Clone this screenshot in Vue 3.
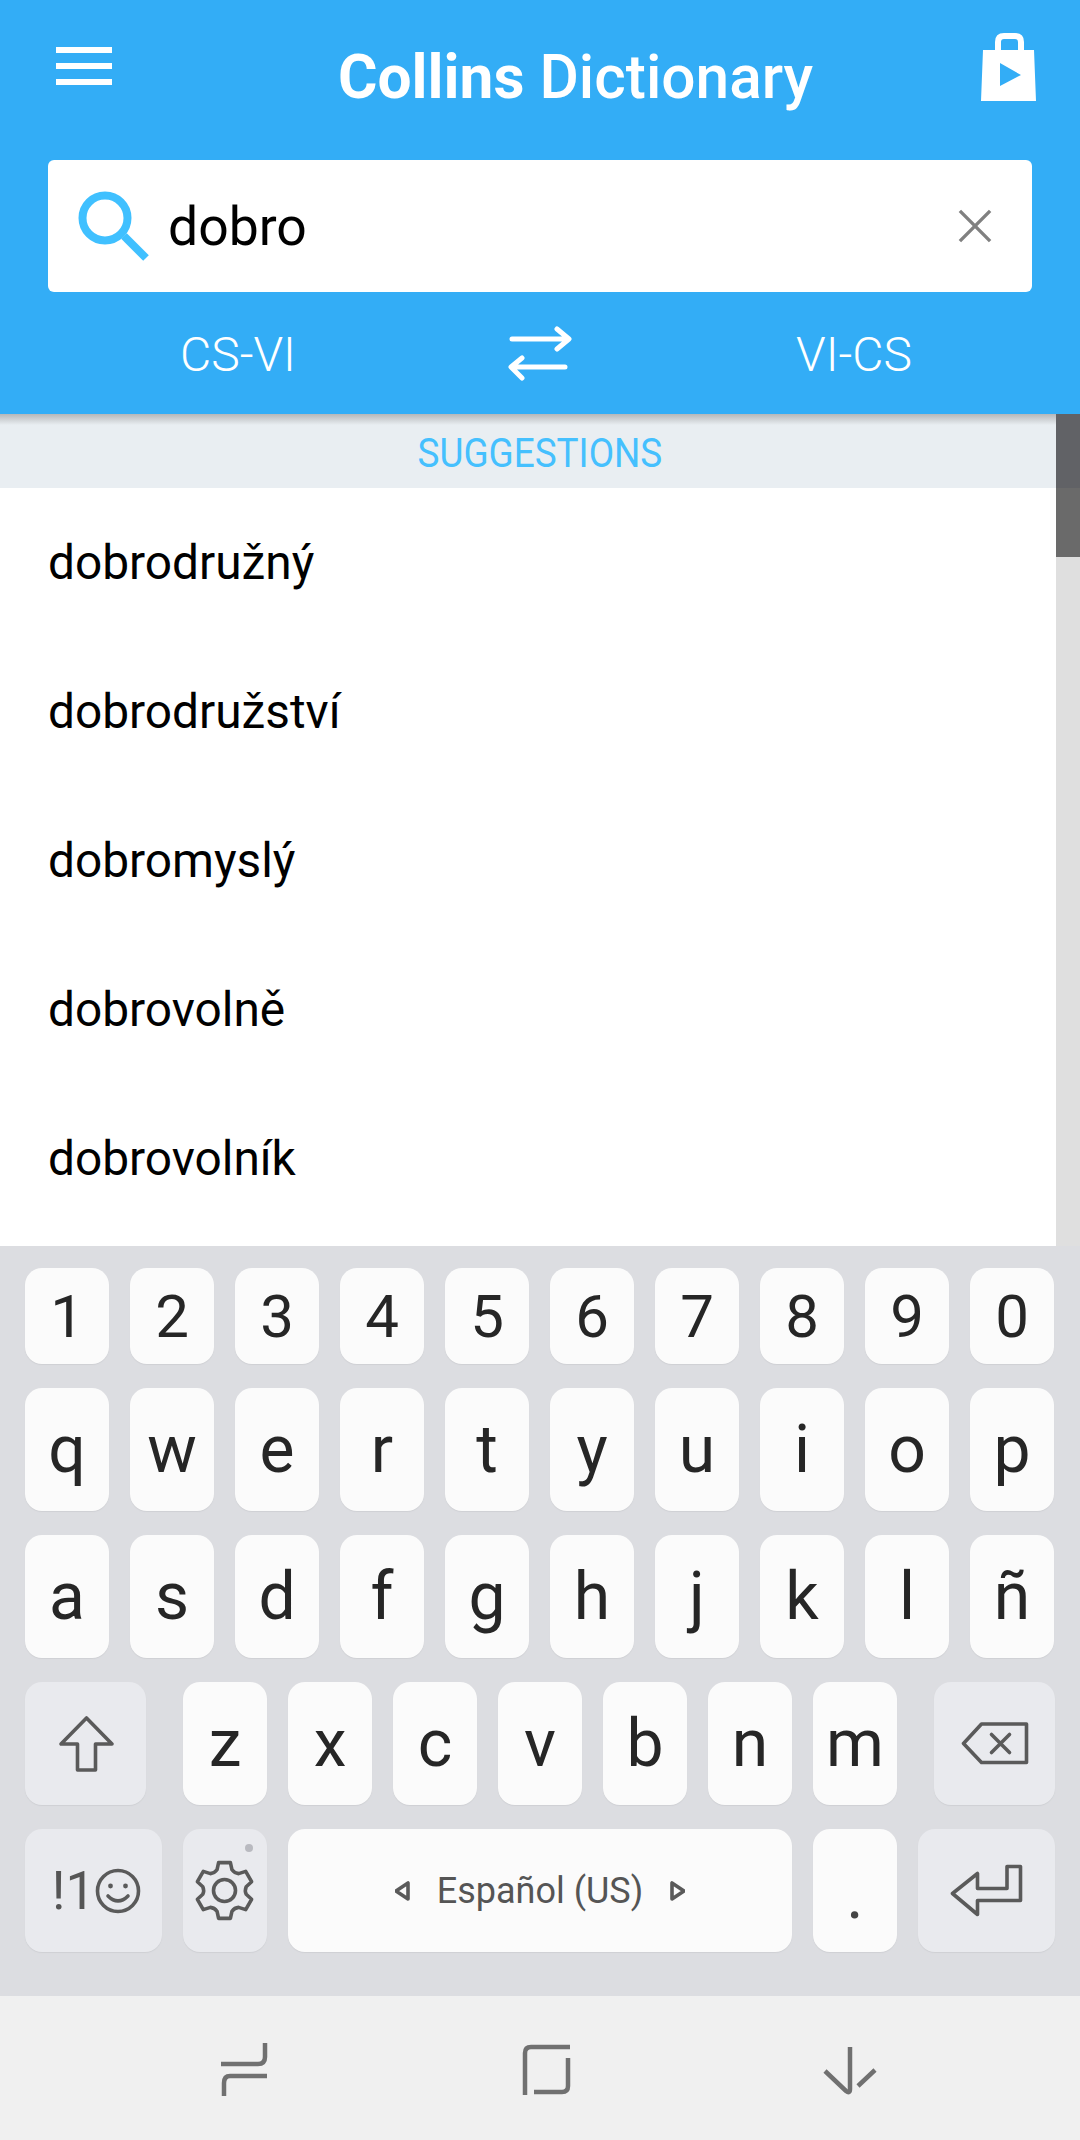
<template>
  <div class="screen">
    <header class="app-bar">
      <div class="top-row">
        <div class="menu"><i></i><i></i><i></i></div>
        <div class="title"><b>Collins</b> Dictionary</div>
        <svg class="bag" viewBox="980 33 57 68">
          <path class="bag-handle" d="M998 52V42Q998 36 1004 36H1015Q1021 36 1021 42V52" />
          <path class="bag-body" d="M983 50H1034L1036 101H981ZM1000 63V86L1021 75Z" />
        </svg>
      </div>
      <div class="search">
        <svg class="search-icon" viewBox="76 188 76 74">
          <circle cx="105" cy="217" r="22.5" />
          <path d="M124 235L146 257" />
        </svg>
        <span class="query">dobro</span>
        <svg class="clear" viewBox="0 0 36 36"><path d="M2 2L34 34M34 2L2 34" /></svg>
      </div>
      <div class="lang-row">
        <span class="lang">CS-VI</span>
        <svg class="swap" viewBox="508 325 64 55">
          <path d="M512 338H568M557 328L569 338L557 348" />
          <path d="M565 366H512M522 357L511 366L522 377" />
        </svg>
        <span class="lang lang-right">VI-CS</span>
      </div>
    </header>

    <div class="results">
      <div class="list">
        <div class="list-label"><span>SUGGESTIONS</span></div>
        <div v-for="word in words" :key="word" class="word">{{ word }}</div>
      </div>
      <div class="scrollbar">
        <div class="thumb-top"></div>
        <div class="thumb-bottom"></div>
      </div>
    </div>

    <div class="keyboard">
      <div class="key-row numbers">
        <div v-for="k in numbers" :key="k" class="key">{{ k }}</div>
      </div>
      <div class="key-row">
        <div v-for="k in row1" :key="k" class="key letter">{{ k }}</div>
      </div>
      <div class="key-row">
        <div v-for="k in row2" :key="k" class="key letter">{{ k }}</div>
      </div>
      <div class="key-row">
        <div class="key fn wide shift-key">
          <svg width="60" height="60" viewBox="55 1713 60 60">
            <path class="ico" d="M85.5 1717L60 1743H76.5V1769H94.5V1743H111Z" />
          </svg>
        </div>
        <div v-for="k in row3" :key="k" class="key letter">{{ k }}</div>
        <div class="key fn wide del-key">
          <svg width="70" height="50" viewBox="959.5 1718.5 70 50">
            <path class="ico" d="M963 1743L981 1723.5H1026V1762H981Z" />
            <path class="ico" d="M991 1734L1009 1752M1009 1734L991 1752" />
          </svg>
        </div>
      </div>
      <div class="key-row">
        <div class="key fn side sym-key">
          <span>!1</span>
          <svg width="46" height="46" viewBox="91 1867 46 46">
            <circle class="ico" cx="114" cy="1890" r="20.5" />
            <circle class="eye" cx="106.5" cy="1885" r="2.4" />
            <circle class="eye" cx="121.5" cy="1885" r="2.4" />
            <path class="ico" d="M104 1895Q114 1905 124 1895" />
          </svg>
        </div>
        <div class="key fn gear-key">
          <svg width="70" height="70" viewBox="190 1855.5 70 70">
            <path class="ico" :d="gearPath" />
            <circle class="ico" cx="224.5" cy="1890" r="11" />
          </svg>
          <span class="gear-dot"></span>
        </div>
        <div class="key space">
          <svg width="15" height="20" viewBox="0 0 15 20"><path class="ico" d="M13 2V18L1 10Z" /></svg>
          <span>Español (US)</span>
          <svg width="15" height="20" viewBox="0 0 15 20"><path class="ico" d="M2 2V18L14 10Z" /></svg>
        </div>
        <div class="key letter period">.</div>
        <div class="key fn side">
          <svg width="80" height="60" viewBox="946.5 1860.5 80 60">
            <path class="ico" d="M952 1893L977 1873V1888H1006.5V1866H1020V1900H977V1914Z" />
          </svg>
        </div>
      </div>
    </div>

    <nav class="nav-bar">
      <div class="nav-cell">
        <svg width="60" height="60" viewBox="214 2040 60 60">
          <path class="nav-ico" d="M221 2064H258Q265 2064 265 2057V2043M267 2076H230Q224 2076 224 2083V2096" />
        </svg>
      </div>
      <div class="nav-cell">
        <svg width="60" height="60" viewBox="517 2040 60 60">
          <path class="nav-ico" d="M525 2095V2053Q525 2047 531 2047H570M568 2058V2086Q568 2092 562 2092H534" />
        </svg>
      </div>
      <div class="nav-cell">
        <svg width="60" height="60" viewBox="819 2040 60 60">
          <path class="nav-ico" d="M849 2047V2089Q849 2094 845 2091L824 2071M874 2070L857 2086" />
        </svg>
      </div>
    </nav>
  </div>
</template>

<script setup>
const words = ['dobrodružný', 'dobrodružství', 'dobromyslý', 'dobrovolně', 'dobrovolník']
const numbers = ['1', '2', '3', '4', '5', '6', '7', '8', '9', '0']
const row1 = ['q', 'w', 'e', 'r', 't', 'y', 'u', 'i', 'o', 'p']
const row2 = ['a', 's', 'd', 'f', 'g', 'h', 'j', 'k', 'l', 'ñ']
const row3 = ['z', 'x', 'c', 'v', 'b', 'n', 'm']

// six teeth, flat on top and bottom
function buildGear(cx, cy, outer, root) {
  const pt = (r, deg) => {
    const a = (deg * Math.PI) / 180
    return `${(cx + r * Math.cos(a)).toFixed(1)} ${(cy + r * Math.sin(a)).toFixed(1)}`
  }
  let d = ''
  for (let i = 0; i < 6; i++) {
    const a = -90 + i * 60
    d += `${i === 0 ? 'M' : 'L'}${pt(outer, a - 12)}L${pt(outer, a + 12)}`
    d += `L${pt(root, a + 20)}Q${pt(root - 2, a + 30)} ${pt(root, a + 40)}`
  }
  return d + 'Z'
}

const gearPath = buildGear(224.5, 1890, 28.5, 22)
</script>

<style scoped>
.screen {
  width: 1080px;
  height: 2140px;
  display: flex;
  flex-direction: column;
  font-family: Roboto, sans-serif;
  overflow: hidden;
}

.app-bar {
  height: 414px;
  flex: none;
  background: #33adf6;
  color: #fff;
}

.top-row {
  height: 160px;
  display: flex;
  align-items: flex-start;
  padding: 0 43px 0 56px;
  box-sizing: border-box;
}

.menu {
  width: 56px;
  margin-top: 47px;
  display: flex;
  flex-direction: column;
  gap: 10px;
}

.menu i {
  display: block;
  height: 6px;
  background: #fff;
}

.title {
  margin: 46px 0 0 226px;
  font-size: 60.4px;
  line-height: 64px;
  font-weight: 500;
  white-space: nowrap;
}

.title b {
  font-weight: 700;
}

.bag {
  margin: 33px 0 0 auto;
  width: 57px;
  height: 68px;
}

.bag-handle {
  fill: none;
  stroke: #fff;
  stroke-width: 6;
}

.bag-body {
  fill: #fff;
  fill-rule: evenodd;
}

.search {
  height: 132px;
  margin: 0 48px;
  background: #fff;
  border-radius: 6px;
  display: flex;
  align-items: center;
  padding-left: 28px;
  padding-right: 40px;
}

.search-icon {
  width: 76px;
  height: 74px;
  flex: none;
  fill: none;
  stroke: #40c0ff;
  stroke-width: 8;
}

.query {
  margin-left: 16px;
  font-size: 53.5px;
  color: #000;
  flex: 1;
}

.clear {
  width: 34px;
  height: 34px;
  fill: none;
  stroke: #808080;
  stroke-width: 3.6;
}

.lang-row {
  height: 122px;
  display: flex;
  align-items: center;
  padding: 2px 0 0 138px;
  box-sizing: border-box;
}

.lang {
  width: 200px;
  text-align: center;
  font-size: 48px;
  font-weight: 300;
}

.lang-right {
  margin-left: 182px;
}

.swap {
  margin-left: 170px;
  margin-top: -2px;
  width: 64px;
  height: 55px;
  fill: none;
  stroke: #fff;
  stroke-width: 5;
  stroke-linecap: round;
  stroke-linejoin: round;
}

.results {
  height: 832px;
  flex: none;
  display: flex;
  background: #fff;
}

.list {
  flex: 1;
  overflow: hidden;
}

.list-label {
  height: 74px;
  line-height: 78px;
  text-align: center;
  padding-left: 24px;
  font-size: 41px;
  color: #45c0fe;
  background: linear-gradient(#b5b7b9, #e9eef2 11px);
}

/* the label is set in a condensed face, Roboto squeezed to match */
.list-label span {
  display: inline-block;
  transform: scaleX(0.9);
}

.word {
  height: 149px;
  line-height: 151px;
  padding-left: 48px;
  font-size: 47.8px;
  color: #000;
}

.scrollbar {
  width: 24px;
  flex: none;
  background: #dfdfdf;
}

.thumb-top {
  height: 74px;
  background: #616266;
}

.thumb-bottom {
  height: 69px;
  background: #6a6a6a;
}

.keyboard {
  height: 750px;
  flex: none;
  background: #dcdde1;
  padding: 22px 25px 0;
  box-sizing: border-box;
  display: flex;
  flex-direction: column;
  gap: 24px;
}

.key-row {
  height: 123px;
  display: flex;
  gap: 21px;
}

.numbers {
  height: 96px;
}

.key {
  width: 84px;
  flex: none;
  position: relative;
  display: flex;
  align-items: center;
  justify-content: center;
  box-sizing: border-box;
  border-radius: 17px;
  background: #fbfbfb;
  box-shadow: 0 1px 1px #cfd0d4;
  font-size: 60px;
  color: #262626;
}

.letter {
  font-size: 66px;
}

.fn {
  background: #e9eaee;
}

.wide {
  width: 121px;
}

.shift-key {
  margin-right: 16px;
}

.del-key {
  margin-left: 16px;
}

.side {
  width: 137px;
}

.sym-key {
  font-size: 53px;
  color: #555;
  gap: 0;
  padding-left: 6px;
}

.gear-dot {
  position: absolute;
  top: 15px;
  right: 14px;
  width: 8px;
  height: 8px;
  border-radius: 50%;
  background: #b9bac0;
}

.space {
  width: 504px;
  gap: 27px;
  font-size: 36px;
  color: #555;
}

.period {
  padding-top: 9px;
  color: #444;
}

.ico {
  fill: none;
  stroke: #5a5a5a;
  stroke-width: 3.6;
  stroke-linejoin: round;
  stroke-linecap: round;
}

.eye {
  fill: #5a5a5a;
}

.nav-bar {
  flex: 1;
  background: #f0f0f0;
  display: flex;
  padding: 4px 0 0 92px;
  box-sizing: border-box;
}

.nav-cell {
  width: 303px;
  display: flex;
  align-items: center;
  justify-content: center;
}

.nav-ico {
  fill: none;
  stroke: #707070;
  stroke-width: 4.5;
}
</style>
